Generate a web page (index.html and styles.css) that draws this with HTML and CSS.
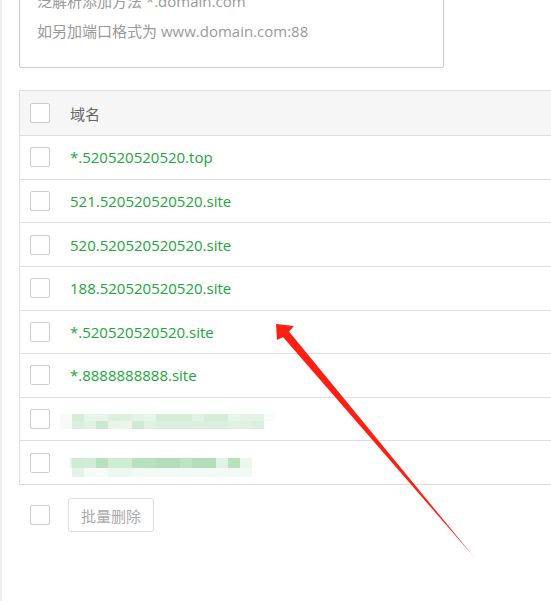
FILE: index.html
```html
<!DOCTYPE html>
<html lang="zh-CN">
<head>
<meta charset="utf-8">
<title>域名管理</title>
<link rel="stylesheet" href="styles.css">
</head>
<body>
<div class="page">
  <div class="textarea">
    <div class="tline">泛解析添加方法 *.domain.com</div>
    <div class="tline">如另加端口格式为 www.domain.com:88</div>
  </div>

  <div class="table">
    <div class="row head">
      <span class="cb"></span>
      <span class="th">域名</span>
    </div>
    <div class="row"><span class="cb"></span><span class="dom">*.520520520520.top</span></div>
    <div class="row"><span class="cb"></span><span class="dom">521.520520520520.site</span></div>
    <div class="row"><span class="cb"></span><span class="dom">520.520520520520.site</span></div>
    <div class="row"><span class="cb"></span><span class="dom">188.520520520520.site</span></div>
    <div class="row"><span class="cb"></span><span class="dom">*.520520520520.site</span></div>
    <div class="row"><span class="cb"></span><span class="dom">*.8888888888.site</span></div>
    <div class="row"><span class="cb"></span><span class="blur blur7"></span></div>
    <div class="row last"><span class="cb"></span><span class="blur blur8"></span></div>
  </div>

  <div class="footer">
    <span class="cb"></span>
    <button class="btn" type="button">批量删除</button>
  </div>
</div>

<svg class="arrow" width="551" height="601" viewBox="0 0 551 601" xmlns="http://www.w3.org/2000/svg">
  <polygon points="276,324 294,326 289,331.5 474,557 283,337 277,340" fill="#ff1e12"/>
</svg>
</body>
</html>
```

FILE: styles.css
```css
html, body {
  margin: 0;
  padding: 0;
  background: #ffffff;
  overflow: hidden;
}

body {
  width: 551px;
  height: 601px;
  position: relative;
  font-family: "Open Sans", "Noto Sans CJK SC", sans-serif;
  font-size: 15px;
}

.page {
  display: flex;
  flex-direction: column;
  align-items: flex-start;
  height: 601px;
  box-sizing: border-box;
  border-left: 2px solid #eeeeee;
  padding-left: 17px;
}

.textarea {
  margin-top: -22px;
  width: 425px;
  box-sizing: border-box;
  border: 1px solid #cccccc;
  border-radius: 2px;
  padding: 7px 17px 21px;
  color: #999999;
}

.tline {
  height: 30px;
  line-height: 30px;
  white-space: nowrap;
}

.table {
  margin-top: 22px;
  width: 560px;
  border: 1px solid #dddddd;
  display: flex;
  flex-direction: column;
}

.row {
  display: flex;
  align-items: center;
  gap: 20px;
  height: 43.625px;
  box-sizing: border-box;
  padding-left: 10px;
  border-bottom: 1px solid #dddddd;
}

.row.last {
  border-bottom: none;
  height: 42.625px;
}

.row.head {
  height: 45px;
  background: #f6f6f6;
}

.cb {
  width: 20px;
  height: 20px;
  box-sizing: border-box;
  border: 1px solid #cccccc;
  border-radius: 2px;
  background: #ffffff;
  flex: none;
}

.th {
  color: #666666;
}

.dom {
  color: #20a53a;
  white-space: nowrap;
}

.blur {
  display: block;
  flex: none;
}

.blur7 {
  width: 216px;
  height: 15px;
  margin-left: -10px;
  margin-top: 4px;
  background-repeat: no-repeat;
  background-size: 216px 7px, 216px 8px;
  background-position: 0 0, 0 7px;
  background-image:
    linear-gradient(to right, #f7fbf7 0 12px, #d3edd7 12px 24px, #e7f5e9 24px 36px, #e9f5eb 36px 48px, #ddf0e0 48px 72px, #e4f3e6 72px 84px, #e7f5e9 84px 96px, #d3edd7 96px 132px, #e0f2e3 132px 144px, #d3edd7 144px 168px, #e7f5e9 168px 180px, #e4f3e6 180px 192px, #e2f2e4 192px 204px, #fafcfa 204px 215px, transparent 215px),
    linear-gradient(to right, #f5faf5 0 12px, #dcefdf 12px 24px, #e1f1e3 24px 36px, #c9e8cf 36px 48px, #e9f5eb 48px 60px, #eaf6ec 60px 72px, #cfead4 72px 84px, #e0f1e2 84px 96px, #dcefdf 96px 168px, #e0f1e2 168px 192px, #dcefdf 192px 204px, transparent 204px);
}

.blur8 {
  width: 182px;
  height: 19px;
  margin-top: 10px;
  background-repeat: no-repeat;
  background-size: 182px 10px, 182px 9px;
  background-position: 0 0, 0 10px;
  background-image:
    linear-gradient(to right, #e6f4e8 0 2px, #d0ebd5 2px 14px, #d3ecd7 14px 26px, #b6e0be 26px 38px, #d0ebd5 38px 62px, #b6e0be 62px 86px, #b2deba 86px 110px, #bee4c5 110px 122px, #b2deba 122px 146px, #e1f3e4 146px 158px, #b6e0be 158px 170px, #ebf6ed 170px 182px),
    linear-gradient(to right, transparent 0 2px, #e3f3e6 2px 14px, #f4faf5 14px 26px, #f8fbf8 26px 38px, #eef7ef 38px 62px, #f3f9f4 62px 182px);
}

.footer {
  display: flex;
  align-items: center;
  gap: 18px;
  margin-top: 13px;
  padding-left: 11px;
}

.btn {
  height: 34px;
  width: 86px;
  box-sizing: border-box;
  border: 1px solid #dddddd;
  border-radius: 3px;
  background: #ffffff;
  color: #aaaaaa;
  font-family: "Noto Sans CJK SC", sans-serif;
  font-size: 15px;
  padding: 0;
}

.arrow {
  position: absolute;
  left: 0;
  top: 0;
  pointer-events: none;
}
```
